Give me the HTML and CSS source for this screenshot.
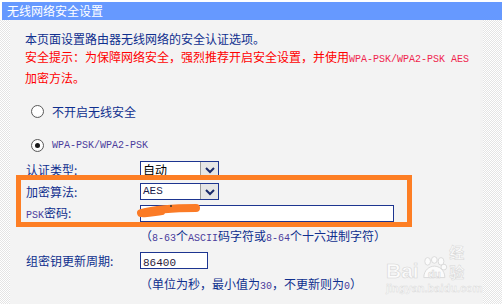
FILE: index.html
```html
<!DOCTYPE html>
<html lang="zh-CN">
<head>
<meta charset="utf-8">
<title>无线网络安全设置</title>
<link rel="stylesheet" href="styles.css">
</head>
<body>
<div class="page">
  <div class="titlebar">无线网络安全设置</div>
  <div class="main">
    <div class="strip"></div>
    <div class="content">
      <p class="intro">本页面设置路由器无线网络的安全认证选项。</p>
      <p class="warn">安全提示：为保障网络安全，强烈推荐开启安全设置，并使用<span class="mono">WPA-PSK/WPA2-PSK AES</span><br>加密方法。</p>

      <div class="radio-row first">
        <span class="radio"></span>
        <span class="label">不开启无线安全</span>
      </div>
      <div class="radio-row second">
        <span class="radio checked"></span>
        <span class="label mono wpa">WPA-PSK/WPA2-PSK</span>
      </div>

      <div class="form">
        <span class="flabel">认证类型:</span>
        <div class="select"><span class="sel-text">自动</span><span class="sel-btn"><svg width="12" height="8" viewBox="0 0 12 8"><path d="M2 2 L6 6 L10 2" fill="none" stroke="#1a2a6a" stroke-width="2"/></svg></span></div>

        <span class="flabel">加密算法:</span>
        <div class="select"><span class="sel-text mono">AES</span><span class="sel-btn"><svg width="12" height="8" viewBox="0 0 12 8"><path d="M2 2 L6 6 L10 2" fill="none" stroke="#1a2a6a" stroke-width="2"/></svg></span></div>

        <span class="flabel"><span class="mono">PSK</span>密码:</span>
        <div class="input wide"></div>
      </div>

      <p class="hint">（<span class="mono">8-63</span>个<span class="mono">ASCII</span>码字符或<span class="mono">8-64</span>个十六进制字符）</p>

      <div class="form single">
        <span class="flabel">组密钥更新周期:</span>
        <div class="input short"><span class="mono val">86400</span></div>
      </div>

      <p class="hint hint2">（单位为秒，最小值为<span class="mono">30</span>，不更新则为<span class="mono">0</span>）</p>
    </div>
    <div class="strip right"></div>
  </div>

  <div class="highlight"></div>
  <svg class="scribble" width="72" height="20" viewBox="0 0 72 20">
    <path d="M7 13 C 22 9, 42 8, 62 8" fill="none" stroke="#fb7b26" stroke-width="8" stroke-linecap="round"/>
    <path d="M8 14 C 14 15, 20 13, 28 12" fill="none" stroke="#fb7b26" stroke-width="6" stroke-linecap="round"/>
    <circle cx="37" cy="6" r="1" fill="#333"/>
  </svg>

  <div class="watermark">
    <div class="wm-logo">
      <span class="wm-bai">Bai</span>
      <svg class="wm-paw" width="30" height="26" viewBox="0 0 30 26">
        <g fill="#fbfbfb" stroke="#d9d9d9" stroke-width="1">
          <ellipse cx="8" cy="5" rx="3" ry="4"/>
          <ellipse cx="15" cy="3.5" rx="3" ry="3.5"/>
          <ellipse cx="22" cy="5" rx="3" ry="4"/>
          <ellipse cx="25" cy="11" rx="3" ry="3"/>
          <path d="M4 22 C 4 14, 10 10, 15 10 C 20 10, 26 14, 26 22 Z"/>
        </g>
        <text x="15" y="22" text-anchor="middle" font-family="Liberation Sans, sans-serif" font-weight="bold" font-size="11" fill="#fff" stroke="#d5d5d5" stroke-width="0.6">du</text>
      </svg>
      <span class="wm-cn">经验</span>
    </div>
    <div class="wm-url">jingyan.baidu.com</div>
  </div>
</div>
</body>
</html>
```

FILE: styles.css
```css
html, body {
  margin: 0;
  padding: 0;
  background: #ffffff;
}

body {
  font-family: "Noto Sans CJK SC", "DejaVu Sans", sans-serif;
  font-size: 12px;
  color: #0f2f8e;
}

.page {
  position: relative;
  width: 502px;
  height: 304px;
  overflow: hidden;
}

.titlebar {
  margin: 2px 0 0 2px;
  height: 18px;
  line-height: 17px;
  padding-left: 5px;
  background: #6699ff;
  color: #ffffff;
  font-size: 12px;
}

.main {
  display: flex;
  height: 284px;
}

.strip {
  width: 10px;
  background: repeating-conic-gradient(#ffffff 0 25%, #e4e4e4 0 50%) 0 0 / 2px 2px;
}

.strip.right {
  width: 19px;
}

.content {
  flex: 1;
  background: #f3f3f3;
  padding: 10px 0 0 15px;
}

p {
  margin: 0;
}

.intro {
  line-height: 18px;
}

.warn {
  line-height: 18px;
  color: #ff0000;
}

.mono {
  font-family: "Liberation Mono", "DejaVu Sans Mono", monospace;
  font-size: 10px;
}

.warn .mono {
  color: #f0264e;
}

.radio-row {
  display: flex;
  align-items: center;
  gap: 8px;
  height: 18px;
  padding-left: 6px;
}

.radio-row.first {
  margin-top: 15px;
}

.radio-row.second {
  margin-top: 16px;
}

.radio {
  position: relative;
  box-sizing: border-box;
  width: 13px;
  height: 13px;
  border-radius: 50%;
  border: 1px solid #5a5a5a;
  background: radial-gradient(circle at 50% 40%, #ffffff 0 55%, #e6e6e6 100%);
}

.radio.checked::after {
  content: "";
  position: absolute;
  left: 3px;
  top: 3px;
  width: 5px;
  height: 5px;
  border-radius: 50%;
  background: #1a1a1a;
}

.wpa {
  color: #4b3c9c;
}

.form {
  display: grid;
  grid-template-columns: 115px auto;
  grid-auto-rows: 17px;
  row-gap: 5px;
  margin-top: 7px;
  align-items: center;
  justify-items: start;
}

.form.single {
  margin-top: 4px;
}

.flabel {
  padding-left: 1px;
  line-height: 17px;
}

.flabel .mono {
  color: #4b3c9c;
}

.select {
  box-sizing: border-box;
  display: flex;
  width: 79px;
  height: 17px;
  border: 1px solid #1d3590;
  background: #ffffff;
}

.sel-text {
  flex: 1;
  padding-left: 2px;
  line-height: 15px;
  color: #000000;
}

.sel-text.mono {
  color: #1a1a4a;
  font-size: 11px;
}

.sel-btn {
  box-sizing: border-box;
  width: 18px;
  height: 15px;
  display: flex;
  align-items: center;
  justify-content: center;
  background: #e6e6e6;
  border-left: 1px solid #9a9a9a;
}

.input {
  box-sizing: border-box;
  height: 17px;
  border: 1px solid #1d3590;
  background: #ffffff;
}

.input.wide {
  width: 254px;
}

.input.short {
  width: 68px;
  padding-left: 2px;
  line-height: 15px;
}

.val {
  color: #2a1a3a;
  font-size: 11px;
}

.hint {
  margin-top: 5px;
  padding-left: 115px;
  line-height: 18px;
}

.hint .mono {
  color: #4b3c9c;
}

.hint2 {
  margin-top: 6px;
}

.highlight {
  position: absolute;
  left: 16px;
  top: 175px;
  width: 386px;
  height: 42px;
  border: 5px solid #fd7e24;
}

.scribble {
  position: absolute;
  left: 134px;
  top: 200px;
}

.watermark {
  position: absolute;
  left: 386px;
  top: 254px;
  width: 92px;
}

.wm-logo {
  display: flex;
  align-items: flex-end;
  height: 28px;
}

.wm-bai {
  font-family: "Liberation Sans", sans-serif;
  font-weight: bold;
  font-size: 21px;
  line-height: 22px;
  color: #fbfbfb;
  -webkit-text-stroke: 0.6px #d6d6d6;
}

.wm-paw {
  margin-left: 1px;
}

.wm-cn {
  font-size: 15px;
  line-height: 20px;
  font-weight: bold;
  color: #fbfbfb;
  -webkit-text-stroke: 0.5px #d6d6d6;
  margin-left: 1px;
}

.wm-url {
  font-family: "Liberation Sans", sans-serif;
  font-size: 11px;
  font-weight: bold;
  color: #fafafa;
  -webkit-text-stroke: 0.4px #d8d8d8;
  line-height: 12px;
}
```
